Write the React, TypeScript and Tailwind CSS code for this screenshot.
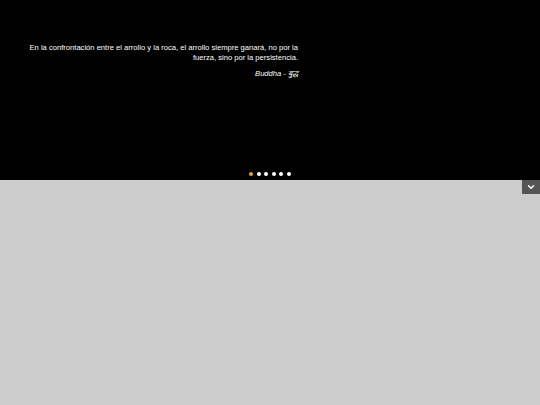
import { ChevronDown } from 'lucide-react';

const dots = [0, 1, 2, 3, 4, 5];

export default function App() {
  return (
    <div className="h-[405px] w-[540px] overflow-hidden bg-[#cccccc] font-['Liberation_Sans',Arial,sans-serif]">
      <div className="relative h-[180px] bg-black">
        <div className="ml-[27px] w-[271px] pt-[43px] text-right text-[7.6px] leading-[10px] text-white">
          <p>
            En la confrontación entre el arrollo y la roca, el arrollo siempre ganará, no por la
            fuerza, sino por la persistencia.
          </p>
          <p className="mt-[6px] italic">Buddha - बुद्ध</p>
        </div>
        <div className="absolute bottom-[4px] left-[249px] flex gap-[3.5px]">
          {dots.map((d) => (
            <span
              key={d}
              className={`h-[4px] w-[4px] rounded-full ${d === 0 ? 'bg-[#f0a030]' : 'bg-white'}`}
            />
          ))}
        </div>
      </div>
      <div className="flex justify-end">
        <button className="flex h-[14px] w-[18px] items-center justify-center bg-[#555555] text-white">
          <ChevronDown className="h-[10px] w-[10px]" strokeWidth={3.5} />
        </button>
      </div>
    </div>
  );
}
